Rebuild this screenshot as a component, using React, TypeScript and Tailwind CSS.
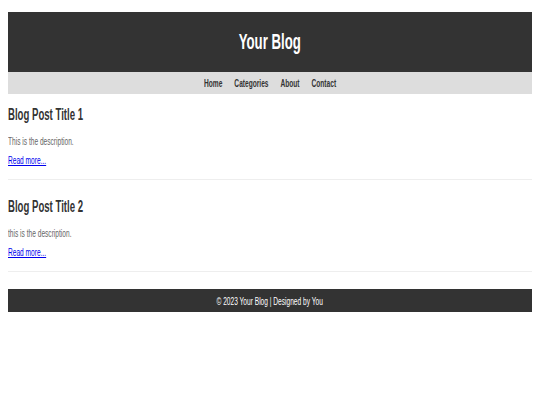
const posts = [
  { title: "Blog Post Title 1", description: "This is the description." },
  { title: "Blog Post Title 2", description: "this is the description." },
];

const navLinks = ["Home", "Categories", "About", "Contact"];

export default function App() {
  return (
    <div className="min-h-screen bg-white font-['Liberation_Sans',Arial,sans-serif]">
      <div className="mx-2 pt-3">
        <header className="h-[60px] bg-[#333] flex items-center justify-center">
          <h1 className="inline-block scale-x-[0.6] text-[22px] leading-[26px] font-bold text-white">
            Your Blog
          </h1>
        </header>

        <nav className="h-[22px] bg-[#ddd] flex items-center justify-center">
          <ul className="flex gap-5 scale-x-[0.6] text-[11px] leading-[14px] font-bold text-[#333]">
            {navLinks.map((link) => (
              <li key={link}>
                <a href="#">{link}</a>
              </li>
            ))}
          </ul>
        </nav>

        <main className="pt-[11px] space-y-[17px]">
          {posts.map((post) => (
            <article key={post.title} className="pb-[12px] border-b border-[#eee]">
              <h2 className="origin-left scale-x-[0.6] text-[16px] leading-[20px] font-bold text-[#333]">
                {post.title}
              </h2>
              <p className="mt-[9px] origin-left scale-x-[0.6] text-[11px] leading-[14px] text-[#666]">
                {post.description}
              </p>
              <a
                href="#"
                className="mt-[5px] block w-fit origin-left scale-x-[0.6] text-[11px] leading-[14px] text-[#0000ee] underline"
              >
                Read more...
              </a>
            </article>
          ))}
        </main>

        <footer className="mt-[17px] h-[23px] bg-[#333] flex items-center justify-center">
          <p className="scale-x-[0.6] text-[11px] leading-[14px] text-white">
            © 2023 Your Blog | Designed by You
          </p>
        </footer>
      </div>
    </div>
  );
}
